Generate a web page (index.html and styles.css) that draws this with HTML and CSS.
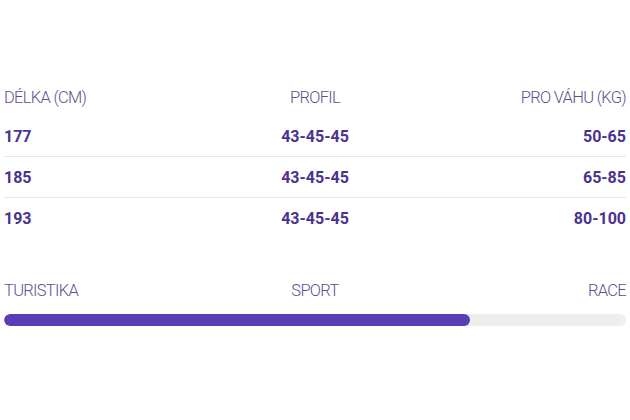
FILE: index.html
```html
<!DOCTYPE html>
<html lang="cs">
<head>
<meta charset="utf-8">
<link rel="stylesheet" href="styles.css">
</head>
<body>
<div class="wrap">
  <div class="table">
    <div class="row head">
      <span class="c l">DÉLKA (CM)</span>
      <span class="c m">PROFIL</span>
      <span class="c r">PRO VÁHU (KG)</span>
    </div>
    <div class="row val">
      <span class="c l">177</span>
      <span class="c m">43-45-45</span>
      <span class="c r">50-65</span>
    </div>
    <div class="row val sep">
      <span class="c l">185</span>
      <span class="c m">43-45-45</span>
      <span class="c r">65-85</span>
    </div>
    <div class="row val sep">
      <span class="c l">193</span>
      <span class="c m">43-45-45</span>
      <span class="c r">80-100</span>
    </div>
  </div>
  <div class="scale">
    <div class="row head">
      <span class="c l">TURISTIKA</span>
      <span class="c m">SPORT</span>
      <span class="c r">RACE</span>
    </div>
    <div class="track"><div class="fill" style="width:74.9%"></div></div>
  </div>
</div>
</body>
</html>
```
FILE: styles.css
```css
html, body { margin: 0; padding: 0; background: #fff; }
body { font-family: Roboto, "Liberation Sans", sans-serif; }
.wrap { padding: 85px 4px 0 4px; }
.row { display: grid; grid-template-columns: 1fr 1fr 1fr; align-items: center; }
.c.l { text-align: left; }
.c.m { text-align: center; }
.c.r { text-align: right; }
.head { color: #5d5190; font-size: 16.5px; font-weight: 300; letter-spacing: -0.7px; height: 24px; }
.val { color: #4a3390; font-size: 16px; font-weight: 700; height: 40px; }
.table .head { margin-bottom: 7px; }
.sep { border-top: 1px solid #e8e8e8; }
.scale { margin-top: 40px; }
.track { margin-top: 12px; height: 12px; border-radius: 6px; background: #eeeeee; overflow: hidden; }
.fill { height: 100%; background: #5a3cb4; border-radius: 6px; }
```
